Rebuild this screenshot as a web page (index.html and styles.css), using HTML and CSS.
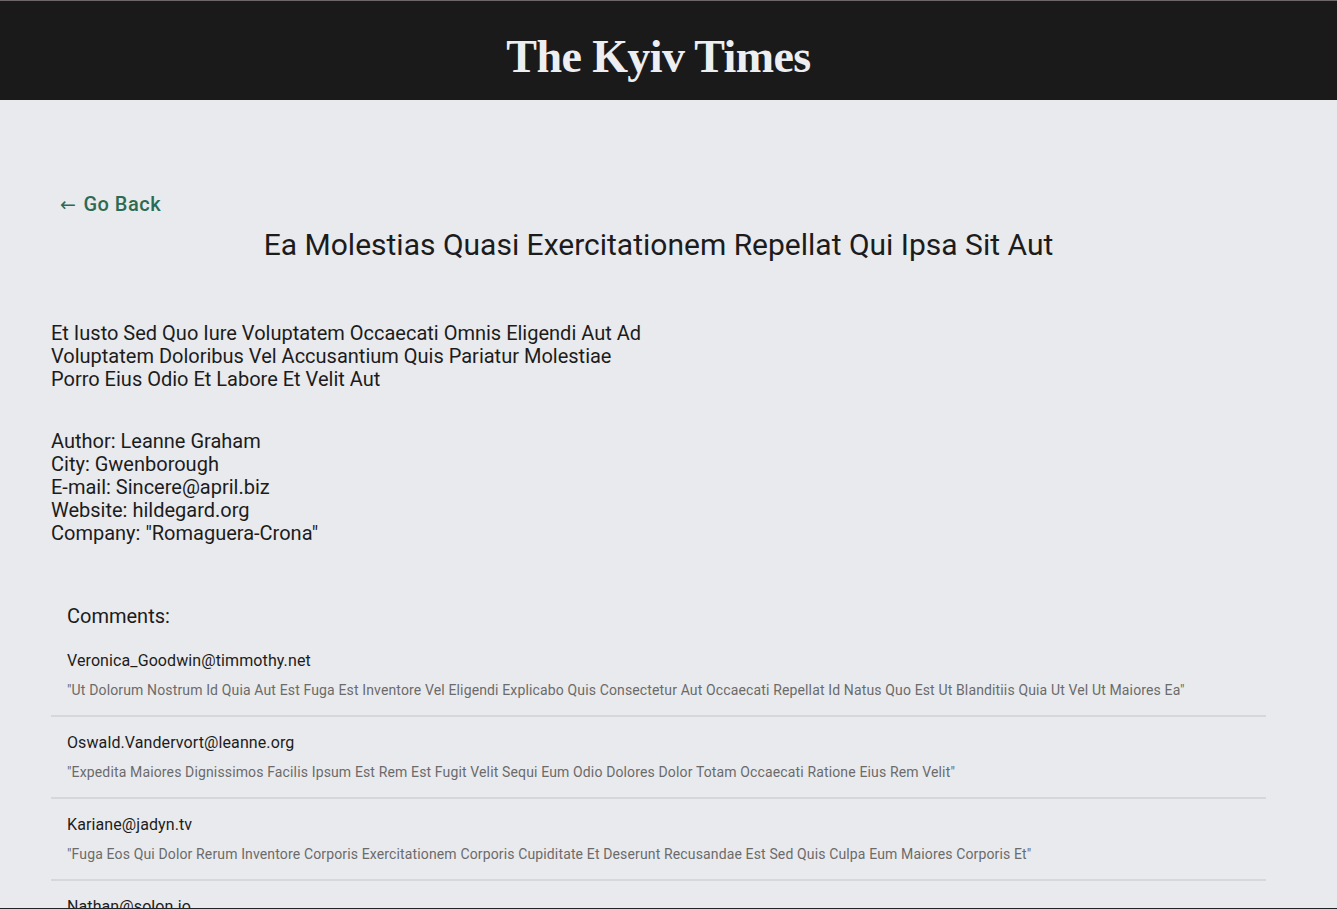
FILE: index.html
```html
<!DOCTYPE html>
<html lang="en">
<head>
<meta charset="utf-8">
<title>The Kyiv Times</title>
<link rel="stylesheet" href="styles.css">
</head>
<body>
<header class="masthead">
  <h1 class="brand">The Kyiv Times</h1>
</header>
<main class="page">
  <a class="back" href="#"><span class="back-arrow">&larr;</span> Go Back</a>
  <h2 class="post-title">Ea Molestias Quasi Exercitationem Repellat Qui Ipsa Sit Aut</h2>
  <p class="post-body">Et Iusto Sed Quo Iure Voluptatem Occaecati Omnis Eligendi Aut Ad<br>Voluptatem Doloribus Vel Accusantium Quis Pariatur Molestiae<br>Porro Eius Odio Et Labore Et Velit Aut</p>
  <div class="author">
    <div>Author: Leanne Graham</div>
    <div>City: Gwenborough</div>
    <div>E-mail: Sincere@april.biz</div>
    <div>Website: hildegard.org</div>
    <div>Company: "Romaguera-Crona"</div>
  </div>
  <section class="comments">
    <h3 class="comments-title">Comments:</h3>
    <ul class="comment-list">
      <li class="comment">
        <div class="comment-email">Veronica_Goodwin@timmothy.net</div>
        <div class="comment-text">"Ut Dolorum Nostrum Id Quia Aut Est Fuga Est Inventore Vel Eligendi Explicabo Quis Consectetur Aut Occaecati Repellat Id Natus Quo Est Ut Blanditiis Quia Ut Vel Ut Maiores Ea"</div>
      </li>
      <li class="comment">
        <div class="comment-email">Oswald.Vandervort@leanne.org</div>
        <div class="comment-text">"Expedita Maiores Dignissimos Facilis Ipsum Est Rem Est Fugit Velit Sequi Eum Odio Dolores Dolor Totam Occaecati Ratione Eius Rem Velit"</div>
      </li>
      <li class="comment">
        <div class="comment-email">Kariane@jadyn.tv</div>
        <div class="comment-text">"Fuga Eos Qui Dolor Rerum Inventore Corporis Exercitationem Corporis Cupiditate Et Deserunt Recusandae Est Sed Quis Culpa Eum Maiores Corporis Et"</div>
      </li>
      <li class="comment">
        <div class="comment-email">Nathan@solon.io</div>
        <div class="comment-text">"Non Et Atque Occaecati Deserunt Quas Accusantium Unde Odit Nobis Qui Voluptatem Quia Voluptas Consequuntur Itaque Dolor Et Qui Rerum Deleniti Ut Occaecati"</div>
      </li>
      <li class="comment">
        <div class="comment-email">Lucio_Hettinger@annie.ca</div>
        <div class="comment-text">"Harum Non Quasi Et Ratione Tempore Iure Ex Voluptates In Ratione Harum Architecto Fugit Inventore Cupiditate Voluptates Magni Quo Et"</div>
      </li>
    </ul>
  </section>
</main>
<div class="frame-bottom"></div>
</body>
</html>
```
FILE: styles.css
```css
html, body {
  margin: 0;
  padding: 0;
}
body {
  background: #e9eaed;
  font-family: Roboto, "Noto Sans", Arial, sans-serif;
  color: #1c1c1c;
}
.masthead {
  background: #1b1a1a;
  border-top: 1px solid #6d6769;
  height: 99px;
  display: flex;
  align-items: center;
  justify-content: center;
  padding-right: 20px;
}
.brand {
  margin: 0;
  font-family: "Liberation Serif", "Times New Roman", serif;
  font-weight: 700;
  font-size: 46px;
  color: #eceef2;
  letter-spacing: -0.6px;
  transform: translateY(6px);
}
.page {
  padding: 92px 71px 40px 51px;
}
.back {
  display: inline-block;
  margin-left: 9px;
  color: #2b6b55;
  font-size: 20px;
  font-weight: 500;
  letter-spacing: 0.5px;
  text-decoration: none;
  line-height: 24px;
}
.back-arrow {
  font-family: "DejaVu Sans", sans-serif;
  font-weight: 400;
  font-size: 19px;
  letter-spacing: 0;
  margin-right: 2px;
}
.post-title {
  margin: 10px 0 0;
  text-align: center;
  font-size: 30px;
  font-weight: 400;
  line-height: 38px;
  color: #1c1c1c;
}
.post-body {
  margin: 58px 0 0;
  font-size: 20px;
  line-height: 23px;
}
.author {
  margin-top: 39px;
  font-size: 20px;
  line-height: 23px;
}
.comments {
  margin-top: 59px;
}
.comments-title {
  margin: 0 0 0 16px;
  font-size: 20px;
  font-weight: 400;
  line-height: 24px;
}
.comment-list {
  list-style: none;
  margin: 23px 0 0;
  padding: 0;
}
.comment {
  padding: 0 16px 15px;
  border-bottom: 2px solid #d6d7da;
  margin-bottom: 16px;
}
.comment-email {
  font-size: 16px;
  line-height: 20px;
  letter-spacing: 0.1px;
  color: #1c1c1c;
}
.comment-text {
  margin-top: 9px;
  font-size: 14px;
  line-height: 20px;
  letter-spacing: 0.14px;
  color: #6b6b6b;
}
.frame-bottom {
  position: fixed;
  left: 0;
  right: 0;
  bottom: 0;
  height: 1px;
  background: #1f2326;
}
```
